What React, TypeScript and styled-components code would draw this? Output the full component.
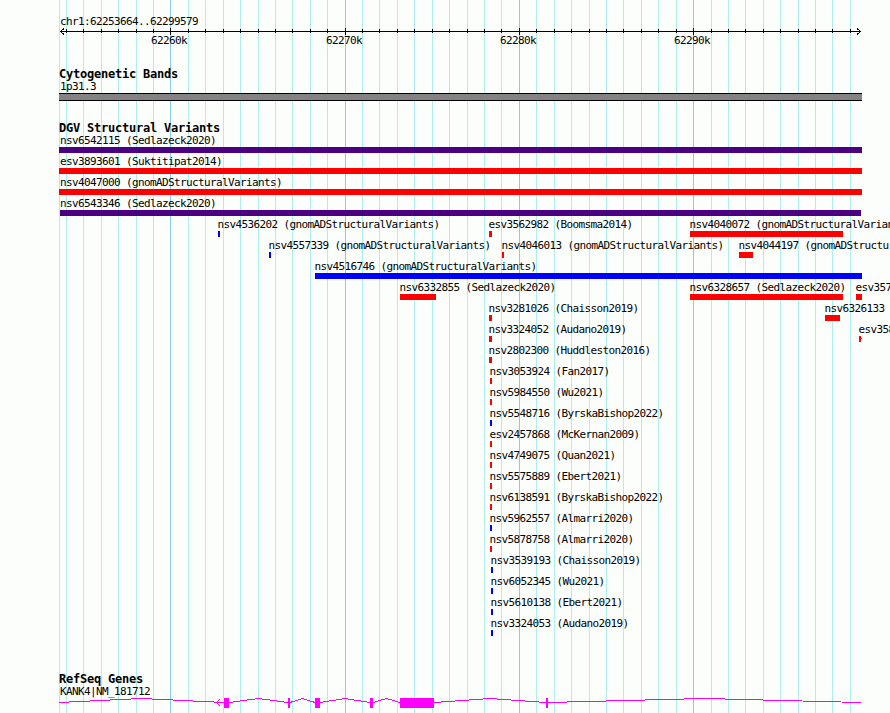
import styled, { createGlobalStyle } from 'styled-components'

type Kind = 'gain' | 'loss' | 'both';

interface Variant {
  name: string;
  start: number;
  end: number;
  kind: Kind;
  labelAt?: number;
  open?: boolean;
}

const colors: Record<Kind, string> = {
  gain: '#0000ff',
  loss: '#ff0000',
  both: '#4b0082',
};

const minorTicks = [
  66, 83, 101, 118, 136, 153, 188, 205, 223, 240, 258, 275, 292, 310, 327,
  362, 379, 397, 414, 432, 449, 467, 484, 501, 536, 554, 571, 589, 606, 623,
  641, 658, 676, 711, 728, 745, 763, 780, 798, 815, 832, 850,
];

const majorTicks = [
  { x: 170, label: '62260k' },
  { x: 345, label: '62270k' },
  { x: 519, label: '62280k' },
  { x: 693, label: '62290k' },
];

const v = (name: string, start: number, end: number, kind: Kind, labelAt?: number): Variant => ({
  name, start, end, kind, labelAt,
});

const rows: Variant[][] = [
  [v('nsv6542115 (Sedlazeck2020)', 59, 862, 'both', 61)],
  [v('esv3893601 (Suktitipat2014)', 59, 862, 'loss', 61)],
  [v('nsv4047000 (gnomADStructuralVariants)', 59, 862, 'loss', 61)],
  [v('nsv6543346 (Sedlazeck2020)', 60, 861, 'both', 61)],
  [
    v('nsv4536202 (gnomADStructuralVariants)', 218, 220, 'gain'),
    v('esv3562982 (Boomsma2014)', 489, 492, 'loss'),
    v('nsv4040072 (gnomADStructuralVariants)', 690, 843, 'loss'),
  ],
  [
    v('nsv4557339 (gnomADStructuralVariants)', 269, 271, 'gain'),
    v('nsv4046013 (gnomADStructuralVariants)', 502, 504, 'loss'),
    v('nsv4044197 (gnomADStructuralVariants)', 739, 753, 'loss'),
  ],
  [v('nsv4516746 (gnomADStructuralVariants)', 315, 862, 'gain')],
  [
    v('nsv6332855 (Sedlazeck2020)', 400, 436, 'loss'),
    v('nsv6328657 (Sedlazeck2020)', 690, 843, 'loss'),
    v('esv357', 856, 862, 'loss'),
  ],
  [v('nsv3281026 (Chaisson2019)', 489, 492, 'loss'), v('nsv6326133', 825, 840, 'loss')],
  [
    v('nsv3324052 (Audano2019)', 489, 492, 'loss'),
    { ...v('esv358', 859, 861, 'loss'), open: true },
  ],
  [v('nsv2802300 (Huddleston2016)', 489, 492, 'loss')],
  [v('nsv3053924 (Fan2017)', 490, 492, 'loss')],
  [v('nsv5984550 (Wu2021)', 490, 492, 'loss')],
  [v('nsv5548716 (ByrskaBishop2022)', 490, 492, 'gain')],
  [v('esv2457868 (McKernan2009)', 490, 492, 'loss')],
  [v('nsv4749075 (Quan2021)', 490, 492, 'loss')],
  [v('nsv5575889 (Ebert2021)', 490, 492, 'loss')],
  [v('nsv6138591 (ByrskaBishop2022)', 490, 492, 'loss')],
  [v('nsv5962557 (Almarri2020)', 490, 492, 'gain')],
  [v('nsv5878758 (Almarri2020)', 490, 492, 'loss')],
  [v('nsv3539193 (Chaisson2019)', 491, 493, 'gain')],
  [v('nsv6052345 (Wu2021)', 491, 493, 'gain')],
  [v('nsv5610138 (Ebert2021)', 491, 493, 'gain')],
  [v('nsv3324053 (Audano2019)', 491, 493, 'gain')],
];

const exons = [[224, 229], [288, 290], [315, 320], [370, 373], [400, 434], [546, 548]];

// each intron rises 4px to its middle and falls back to the baseline
const intronPath = () => {
  const edges = [59, ...exons.flat(), 861];
  let d = '';
  for (let i = 0; i < edges.length; i += 2) {
    const from = edges[i];
    const to = edges[i + 1];
    d += `M${from} 6.5L${(from + to) / 2} 2.5L${to} 6.5`;
  }
  return d;
};

function GridLines() {
  return (
    <Backdrop width="890" height="713" shapeRendering="crispEdges">
      {[59, ...minorTicks].map((x) => <rect key={x} x={x} width="1" height="713" fill="#aeeeec" />)}
      {majorTicks.map(({ x }) => <rect key={x} x={x} width="1" height="713" fill="#86cbe9" />)}
    </Backdrop>
  )
}

function Ruler() {
  return (
    <>
      <Drawing width="890" height="7" shapeRendering="crispEdges">
        <rect x="60" y="3" width="801" height="1" />
        {minorTicks.map((x) => <rect key={x} x={x} y="1" width="1" height="4" />)}
        {majorTicks.map(({ x }) => <rect key={x} x={x} y="0" width="1" height="7" />)}
        <path d="M64 0.5L60.5 3.5L64 6.5M857 0.5L860.5 3.5L857 6.5" fill="none" stroke="#000" />
      </Drawing>
      <TickLabels>
        {majorTicks.map(({ x, label }) => <Label key={x} $x={x - 18}>{label}</Label>)}
      </TickLabels>
    </>
  )
}

function Gene() {
  return (
    <GeneDrawing width="890" height="14" shapeRendering="crispEdges">
      <path d={intronPath()} fill="none" stroke="#ff00ff" />
      <path d="M220 3L216.9 6.5L220 10" fill="none" stroke="#ff00ff" />
      {exons.map(([from, to]) => (
        <rect key={from} x={from} y="2" width={to - from} height="10" fill="#ff00ff" />
      ))}
    </GeneDrawing>
  )
}

export default function App() {
  return (
    <Browser>
      <GlobalStyle />
      <GridLines />
      <Track $height={53}>
        <Label $x={61}>chr1:62253664..62299579</Label>
        <Ruler />
      </Track>
      <Track $height={54}>
        <Title>Cytogenetic Bands</Title>
        <Label $x={61}>1p31.3</Label>
        <Band />
      </Track>
      <Track $height={551}>
        <Title>DGV Structural Variants</Title>
        {rows.map((row) => (
          <Row key={row[0].name}>
            {row.map(({ name, start, end, kind, labelAt, open }) => (
              <Feature key={name}>
                <Label $x={labelAt ?? start + 0.5}>{name}</Label>
                <Bar $start={start} $end={end} $kind={kind} $open={open} />
              </Feature>
            ))}
          </Row>
        ))}
      </Track>
      <Track $height={40}>
        <Title>RefSeq Genes</Title>
        <Label $x={61}>KANK4|NM_181712</Label>
        <Gene />
      </Track>
    </Browser>
  )
}

const GlobalStyle = createGlobalStyle`
  body{
    margin: 0;
    background: #fcfefc;
    overflow: hidden;
  }
`

const Browser = styled.main`
  position: relative;
  box-sizing: border-box;
  width: 890px;
  height: 713px;
  padding-top: 15px;
  overflow: hidden;
  background: #fcfefc;
  color: #000;
  font-family: 'DejaVu Sans Mono', 'Liberation Mono', monospace;
`

const Backdrop = styled.svg`
  position: absolute;
  top: 0;
  left: 0;
`

const Drawing = styled.svg`
  display: block;
`

const GeneDrawing = styled(Drawing)`
  margin-top: -2px;
`

const Track = styled.section<{ $height: number }>`
  position: relative;
  height: ${({ $height }) => $height}px;
`

const Title = styled.h2`
  margin: 0 0 0 59px;
  height: 12px;
  line-height: 13px;
  font-size: 12px;
  font-weight: 700;
  letter-spacing: -.224px;
  white-space: pre;
`

const Label = styled.div<{ $x: number }>`
  margin-left: ${({ $x }) => $x - 1}px;
  height: 13px;
  line-height: 13px;
  font-size: 11px;
  letter-spacing: -.622px;
  white-space: pre;
`

const Stack = styled.div`
  display: grid;
  & > *{
    grid-area: 1 / 1;
  }
`

const TickLabels = styled(Stack)`
  margin-top: -1px;
`

const Row = styled(Stack)`
  height: 21px;
`

const Feature = styled.div`
  min-width: 0;
`

const Bar = styled.div<{ $start: number; $end: number; $kind: Kind; $open?: boolean }>`
  margin-left: ${({ $start }) => $start}px;
  width: ${({ $start, $end }) => $end - $start}px;
  height: 6px;
  background: ${({ $kind }) => colors[$kind]};
  box-shadow: ${({ $open }) => ($open ? `1px 0 0 -2px ${colors.loss}` : 'none')};
  position: relative;
  &::after{
    content: ${({ $open }) => ($open ? "''" : 'none')};
    position: absolute;
    top: 2px;
    left: 100%;
    width: 1px;
    height: 1px;
    background: inherit;
  }
`

const Band = styled.div`
  box-sizing: border-box;
  margin-left: 59px;
  width: 803px;
  height: 8px;
  border: solid #000;
  border-width: 1px 0;
  background: #848284;
`
